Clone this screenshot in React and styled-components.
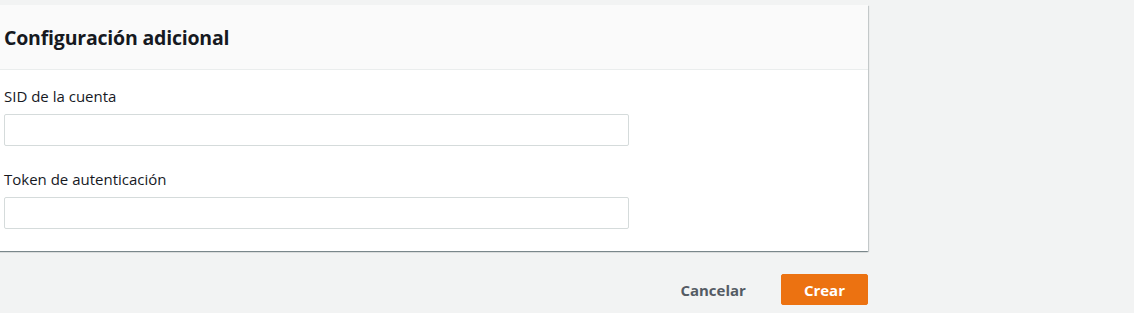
import React, { useState } from 'react';
import styled, { createGlobalStyle } from 'styled-components';

const GlobalStyle = createGlobalStyle`
  body {
    margin: 0;
    background: #f2f3f3;
    font-family: "Open Sans", "Liberation Sans", sans-serif;
    color: #16191f;
  }
`;

const Page = styled.div`
  width: 868px;
  padding-top: 5px;
`;

const Card = styled.div`
  margin-left: -16px;
  background: #ffffff;
  box-shadow: 0 1px 1px 0 rgba(0, 28, 36, 0.3), 1px 1px 1px 0 rgba(0, 28, 36, 0.15),
    -1px 1px 1px 0 rgba(0, 28, 36, 0.15);
`;

const Header = styled.div`
  background: #fafafa;
  border-bottom: 1px solid #eaeded;
  height: 64px;
  padding: 0 20px;
  display: flex;
  align-items: center;
`;

const Title = styled.h2`
  margin: 0;
  font-size: 19.5px;
  font-weight: 700;
  letter-spacing: -0.2px;
`;

const Body = styled.div`
  padding: 15px 20px 22px;
  display: flex;
  flex-direction: column;
  gap: 22px;
`;

const Field = styled.label`
  display: flex;
  flex-direction: column;
  gap: 7px;
`;

const LabelText = styled.span`
  font-size: 15px;
  line-height: 22px;
  color: #16191f;
`;

const Input = styled.input`
  box-sizing: border-box;
  width: 625px;
  height: 32px;
  border: 1px solid #d5dbdb;
  border-radius: 2px;
  background: #fff;
  font: inherit;
  font-size: 14px;
  padding: 0 10px;
  outline: none;
`;

const Footer = styled.div`
  display: flex;
  justify-content: flex-end;
  align-items: center;
  gap: 14px;
  padding-top: 23px;
`;

const Button = styled.button`
  height: 31px;
  padding: 0 ${(p) => (p.primary ? '22px' : '20px')};
  border: 1px solid ${(p) => (p.primary ? '#ec7211' : 'transparent')};
  border-radius: 2px;
  background: ${(p) => (p.primary ? '#ec7211' : 'transparent')};
  color: ${(p) => (p.primary ? '#ffffff' : '#545b64')};
  font-family: inherit;
  font-size: 15px;
  font-weight: 700;
  cursor: pointer;
`;

const App = () => {
  const [values, setValues] = useState({ sid: '', token: '' });

  const handleChange = (e) => {
    setValues({ ...values, [e.target.name]: e.target.value });
  };

  return (
    <Page>
      <GlobalStyle />
      <Card>
        <Header>
          <Title>Configuración adicional</Title>
        </Header>
        <Body>
          <Field>
            <LabelText>SID de la cuenta</LabelText>
            <Input name="sid" value={values.sid} onChange={handleChange} />
          </Field>
          <Field>
            <LabelText>Token de autenticación</LabelText>
            <Input name="token" value={values.token} onChange={handleChange} />
          </Field>
        </Body>
      </Card>
      <Footer>
        <Button>Cancelar</Button>
        <Button primary>Crear</Button>
      </Footer>
    </Page>
  );
};

export default App;
